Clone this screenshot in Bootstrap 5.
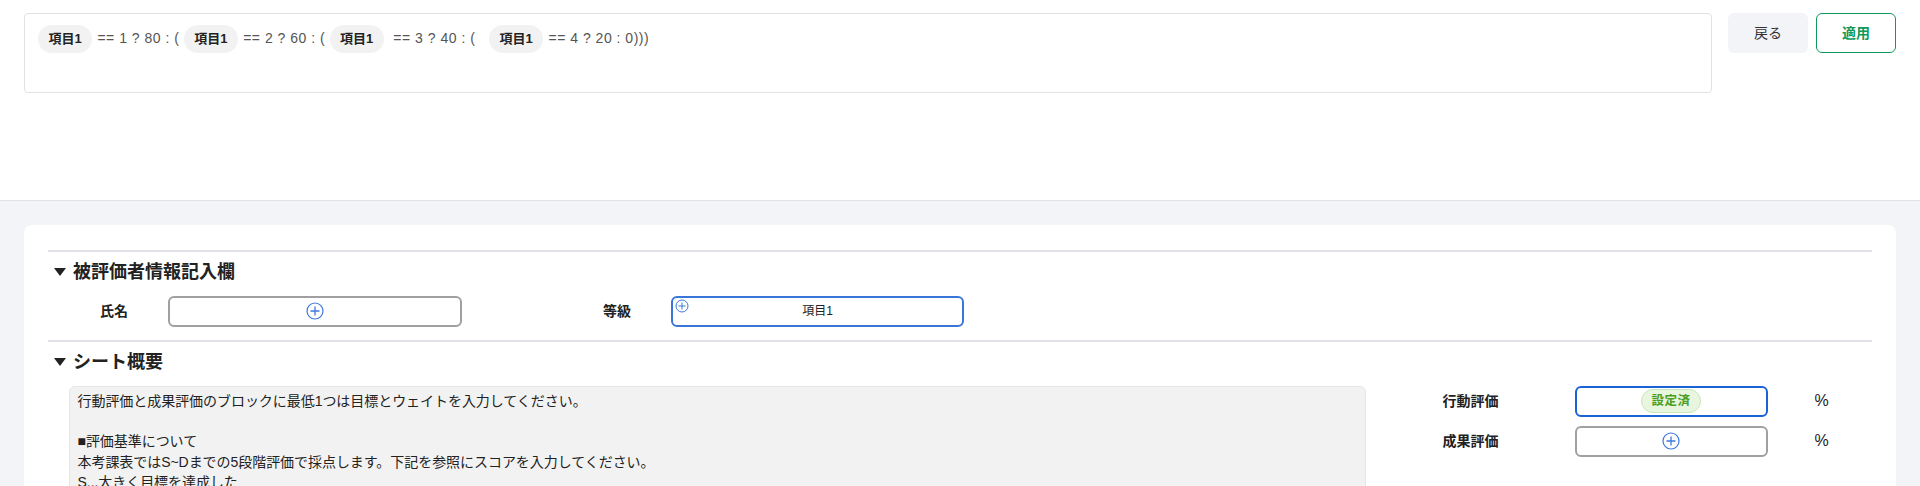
<!DOCTYPE html>
<html lang="ja">
<head>
<meta charset="utf-8">
<title>シート設定</title>
<link href="https://cdn.jsdelivr.net/npm/bootstrap@5.3.0/dist/css/bootstrap.min.css" rel="stylesheet">
<style>
html,body{height:486px;overflow:hidden}
body{font-family:"Liberation Sans","Noto Sans CJK JP",sans-serif;color:#222;background:#f3f4f8;font-size:14px}
.top-pane{height:201px;background:#fff;border-bottom:1px solid #dfe1e6;padding:13px 24px 0}
.formula-box{width:1688px;height:80px;border:1px solid #e2e2e2;border-radius:4px;padding:10px 13px;font-size:14px;letter-spacing:.5px;color:#555;line-height:28px;white-space:nowrap}
.token{display:inline-block;width:54px;height:28px;border-radius:14px;background:#f2f2f2;text-align:center;font-weight:700;font-size:13px;color:#222;letter-spacing:0;margin-right:1px}
.token-far{margin-left:5px}
.act-btn{width:80px;height:40px;border-radius:6px;font-size:14px;padding:0;--bs-btn-font-size:14px}
.act-back{background:#f2f4f8;border:0;color:#333;margin-left:16px;margin-right:8px}
.act-apply{background:#fff;border:1.5px solid #0f9a5c;color:#0f9a5c;font-weight:700}
.sheet-card{margin:24px 24px 0;background:#fff;border-radius:8px;padding:25px 24px 0;height:400px}
.sec-line{height:2px;background:#e0e0e6}
.sec-head{height:43.5px;padding:0 0 3px 6px;gap:7px;font-size:18px;font-weight:700;color:#222}
.field-label{font-weight:700;font-size:14px;color:#222}
.slot{height:31px;background:#fff;border:2px solid #a0a0a0;border-radius:6px;padding:0;position:relative}
.slot-blue{border-color:#3a76d8}
.slot-dark{border-color:#1a62d6}
.info-row{height:44.5px}
.lab-a{width:120px;padding-left:12px;text-align:center;flex:none}
.slot-a{width:294px;flex:none}
.slot-b{width:293px;flex:none;font-size:12px;color:#222}
.gap-b{margin-left:89px}
.corner-plus{position:absolute;left:2px;top:1px;display:block}
.overview{margin-left:20.5px;gap:77px}
.desc-box{width:1297px;flex:none;height:200px;background:#f2f2f2;border:1px solid #e6e6e6;border-radius:6px;padding:4.5px 8px;line-height:20.2px;font-size:14px;color:#222;white-space:nowrap;letter-spacing:-.05px}
.weight-row{height:31px;margin-bottom:9px}
.lab-w{width:132px;flex:none}
.slot-w{width:193px;flex:none}
.pct{margin-left:47px;font-size:16px;color:#222}
.done-tag{display:inline-block;width:60px;height:24px;line-height:22px;border-radius:12px;background:#e8f5df;border:1px solid #c9e7b8;color:#4a9e24;font-weight:700;font-size:12.5px;letter-spacing:.5px}
</style>
</head>
<body>
<div class="top-pane d-flex align-items-start">
  <div class="formula-box">
    <span class="token">項目1</span> == 1 ? 80 : ( <span class="token">項目1</span> == 2 ? 60 : ( <span class="token">項目1</span> &nbsp;== 3 ? 40 : ( &nbsp;<span class="token token-far">項目1</span> == 4 ? 20 : 0)))
  </div>
  <button type="button" class="btn act-btn act-back">戻る</button>
  <button type="button" class="btn act-btn act-apply">適用</button>
</div>
<div class="sheet-card">
  <div class="sec-line"></div>
  <div class="sec-head d-flex align-items-center">
    <svg width="12" height="8" viewBox="0 0 12 8" aria-hidden="true"><path d="M0 0H12L6 8Z" fill="#222"/></svg>
    <span>被評価者情報記入欄</span>
  </div>
  <div class="info-row d-flex align-items-start">
    <div class="field-label lab-a" style="line-height:31px">氏名</div>
    <button type="button" class="slot slot-a d-flex align-items-center justify-content-center">
      <svg width="18" height="18" viewBox="0 0 18 18" aria-hidden="true"><circle cx="9" cy="9" r="8" fill="none" stroke="#3f78dc" stroke-width="1.2"/><path d="M9 4.5V13.5M4.5 9H13.5" stroke="#3f78dc" stroke-width="1.3"/></svg>
    </button>
    <div class="field-label lab-a gap-b" style="line-height:31px">等級</div>
    <button type="button" class="slot slot-b slot-blue d-flex align-items-center justify-content-center">
      <svg class="corner-plus" width="14" height="14" viewBox="0 0 14 14" aria-hidden="true"><circle cx="7" cy="7" r="6" fill="none" stroke="#3f78dc"/><path d="M7 3.5V10.5M3.5 7H10.5" stroke="#3f78dc"/></svg>
      項目1
    </button>
  </div>
  <div class="sec-line"></div>
  <div class="sec-head d-flex align-items-center">
    <svg width="12" height="8" viewBox="0 0 12 8" aria-hidden="true"><path d="M0 0H12L6 8Z" fill="#222"/></svg>
    <span>シート概要</span>
  </div>
  <div class="overview d-flex align-items-start">
    <div class="desc-box">行動評価と成果評価のブロックに最低1つは目標とウェイトを入力してください。<br><br>■評価基準について<br>本考課表ではS~Dまでの5段階評価で採点します。下記を参照にスコアを入力してください。<br>S...大きく目標を達成した</div>
    <div>
      <div class="weight-row d-flex align-items-center">
        <div class="field-label lab-w">行動評価</div>
        <button type="button" class="slot slot-w slot-dark d-flex align-items-center justify-content-center"><span class="done-tag">設定済</span></button>
        <div class="pct">%</div>
      </div>
      <div class="weight-row d-flex align-items-center">
        <div class="field-label lab-w">成果評価</div>
        <button type="button" class="slot slot-w d-flex align-items-center justify-content-center">
          <svg width="18" height="18" viewBox="0 0 18 18" aria-hidden="true"><circle cx="9" cy="9" r="8" fill="none" stroke="#3f78dc" stroke-width="1.2"/><path d="M9 4.5V13.5M4.5 9H13.5" stroke="#3f78dc" stroke-width="1.3"/></svg>
        </button>
        <div class="pct">%</div>
      </div>
    </div>
  </div>
</div>
<script src="https://cdn.jsdelivr.net/npm/bootstrap@5.3.0/dist/js/bootstrap.bundle.min.js"></script>
</body>
</html>
